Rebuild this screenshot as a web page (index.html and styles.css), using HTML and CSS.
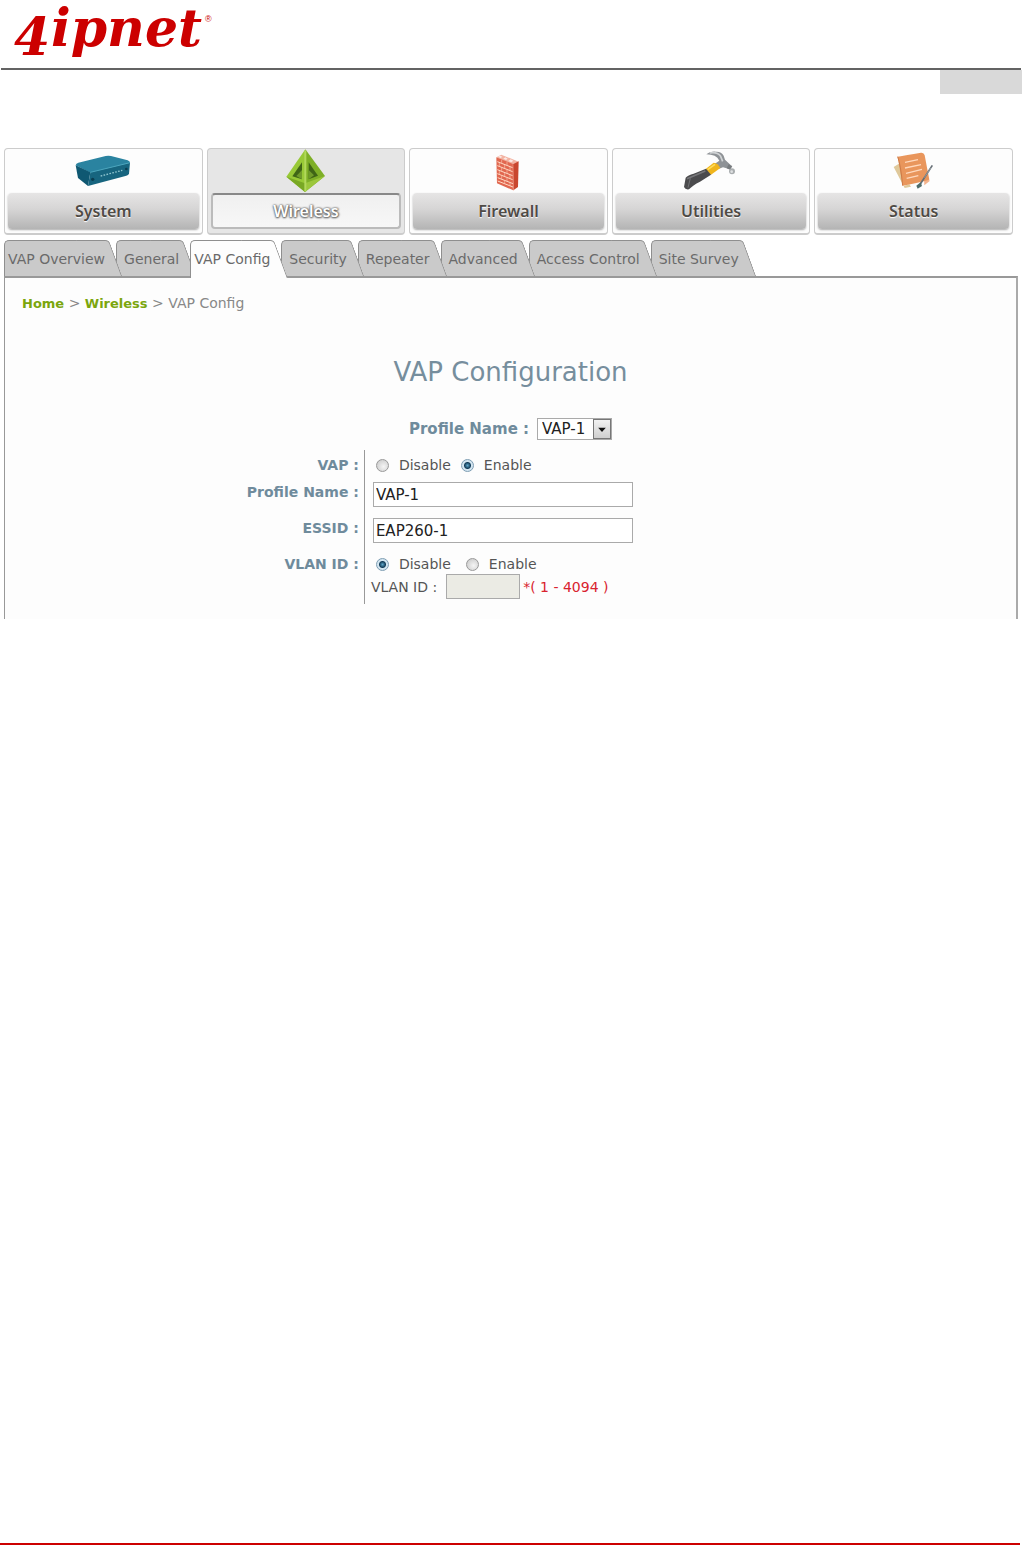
FILE: index.html
```html
<!DOCTYPE html>
<html lang="en">
<head>
  <meta charset="UTF-8" />
  <meta name="viewport" content="width=device-width, initial-scale=1.0"/>
  <title>VAP Configuration</title>
  <link rel="stylesheet" href="styles.css">
</head>
<body>
  <header class="page-header">
    <svg class="logo" viewBox="0 0 212 68" role="img" aria-label="4ipnet">
      <text class="logo-text" x="13" y="55">4</text>
      <text class="logo-text" x="50" y="46">ipnet</text>
      <text class="logo-mark" x="204" y="22">®</text>
    </svg>
  </header>
  <div class="page-marker"></div>

  <main>
    <nav class="main-nav">
      <a class="nav-card" href="#system">
        <svg class="nav-icon" viewBox="220 27 180 132">
          <path d="M228 76 Q229 70 236 68 L318 48 Q326 46 334 48 L384 61 Q392 64 391 70 L272 98 Z" fill="#2a83a0"/>
          <path d="M228 76 L272 97 L265 138 L235 114 Z" fill="#0f5872"/>
          <path d="M272 97 L391 68 L388 101 Q386 105 380 107 L265 138 Z" fill="#17657f"/>
          <path d="M272 97 L391 68" stroke="#4ba5bd" stroke-width="3"/>
          <path d="M303 108 L368 91" stroke="#8fc5cf" stroke-width="4" stroke-dasharray="5 4"/>
          <circle cx="279" cy="118" r="5" fill="#0a3d50"/>
          <circle cx="380" cy="87" r="4" fill="#0a3d50"/>
        </svg>
        <span class="nav-label">System</span>
      </a>
      <a class="nav-card active" href="#wireless">
        <svg class="nav-icon" viewBox="229 27 180 132">
          <path d="M317 28 L260 110 L316 156 Z" fill="#98c937"/>
          <path d="M317 28 L376 108 L316 156 Z" fill="#7eaf27"/>
          <path d="M260 110 L316 130 L316 156 Z" fill="#79a824"/>
          <path d="M316 130 L376 108 L316 156 Z" fill="#9cc73c"/>
          <path d="M307 67 L307 118 L278 109 Z" fill="#3f6516"/>
          <path d="M307 90 L307 118 L290 108 Z" fill="#6f9a2a"/>
          <path d="M327 67 L327 118 L355 107 Z" fill="#3f6516"/>
          <path d="M327 90 L327 118 L343 106 Z" fill="#6f9a2a"/>
          <path d="M317 32 L317 154" stroke="#b2d85c" stroke-width="6"/>
        </svg>
        <span class="nav-label">Wireless</span>
      </a>
      <a class="nav-card" href="#firewall">
        <svg class="nav-icon" viewBox="220 27 180 132">
          <path d="M275 52 L290 44 L342 65 L325 75 Z" fill="#f3b3a2"/>
          <path d="M275 52 L325 72 L326 151 L277 130 Z" fill="#e1674f"/>
          <path d="M325 73 L342 64 L340 141 L326 151 Z" fill="#c9472f"/>
          <path d="M278 65 L324 83 M278 77 L324 95 M278 89 L324 107 M278 101 L324 119 M279 113 L325 131 M279 123 L325 141" stroke="#ffd9c4" stroke-width="3"/>
          <path d="M291 60 V70 M307 66 V76 M284 69 V80 M300 75 V86 M316 81 V92 M291 83 V94 M307 89 V101 M284 93 V104 M300 99 V110 M316 105 V116 M291 107 V118 M307 113 V124 M300 122 V132 M316 128 V138" stroke="#f9c3ad" stroke-width="2"/>
          <path d="M325 73 L326 151" stroke="#f0947e" stroke-width="2"/>
          <path d="M280 50 L286 47 L293 50 L288 54 Z M296 56 L302 52 L309 56 L304 60 Z M311 63 L318 58 L326 62 L320 67 Z" fill="#fff" opacity="0.7"/>
        </svg>
        <span class="nav-label">Firewall</span>
      </a>
      <a class="nav-card" href="#utilities">
        <svg class="nav-icon" viewBox="229 27 180 132">
          <path d="M305 43 Q316 33 334 35 Q350 34 357 47 L361 59 L378 75 L371 86 L355 82 L339 88 L325 75 L344 62 Q335 43 305 43 Z" fill="#8e9296"/>
          <path d="M315 39 Q338 35 348 49 L354 64" fill="none" stroke="#d0d3d5" stroke-width="5"/>
          <path d="M369 79 L380 84" stroke="#777b7e" stroke-width="13"/>
          <circle cx="382" cy="94" r="9" fill="#a9adaf"/>
          <circle cx="381" cy="95" r="4" fill="#dfe1e2"/>
          <path d="M303 87 L327 68 Q340 69 347 84 L318 105 Z" fill="#f0b51c"/>
          <path d="M309 89 L331 73" stroke="#ffdc59" stroke-width="5"/>
          <path d="M304 86 L319 104 L286 125 Q264 136 253 148 Q242 150 238 141 L243 113 Q250 105 267 101 Z" fill="#4b4b4d"/>
          <path d="M247 116 Q279 103 302 93" fill="none" stroke="#77777a" stroke-width="5"/>
          <path d="M250 143 L257 115" stroke="#858588" stroke-width="2"/>
        </svg>
        <span class="nav-label">Utilities</span>
      </a>
      <a class="nav-card" href="#status">
        <svg class="nav-icon" viewBox="250 27 180 132">
          <path d="M279 81 L297 70 L309 138 L326 133 L331 140 L312 144 Z" fill="#dfc89a"/>
          <path d="M370 113 L388 122 L371 136 Z" fill="#f3b38c"/>
          <path d="M291 50 Q315 45 361 38 Q370 37 372 46 L386 119 Q355 128 306 137 Z" fill="#e9965c"/>
          <path d="M291 50 Q300 74 306 137" fill="none" stroke="#cc7a47" stroke-width="3"/>
          <path d="M313 67 L352 59 M313 84 L361 74 M316 100 L364 88 M318 115 L353 107" fill="none" stroke="#ffd9bd" stroke-width="4"/>
          <path d="M395 76 L359 132" stroke="#656e75" stroke-width="5"/>
          <path d="M391 83 L371 113" stroke="#a6adb2" stroke-width="2"/>
          <path d="M360 127 L364 138 L351 146 L347 137 Z" fill="#4f6d6b"/>
        </svg>
        <span class="nav-label">Status</span>
      </a>
    </nav>

    <ul class="tabs">
      <li><a href="#vap-overview">VAP Overview</a></li>
      <li><a href="#general">General</a></li>
      <li class="current"><a href="#vap-config">VAP Config</a></li>
      <li><a href="#security">Security</a></li>
      <li><a href="#repeater">Repeater</a></li>
      <li><a href="#advanced">Advanced</a></li>
      <li><a href="#access-control">Access Control</a></li>
      <li><a href="#site-survey">Site Survey</a></li>
    </ul>

    <section class="panel">
      <div class="breadcrumb">
        <a href="#home">Home</a> &gt; <a href="#wireless">Wireless</a> &gt; VAP Config
      </div>

      <h1>VAP Configuration</h1>

      <form>
        <div class="profile-picker">
          <label for="profile-select">Profile Name :</label>
          <div class="select-box">
            <select id="profile-select">
              <option>VAP-1</option>
            </select>
            <svg class="select-arrow" viewBox="0 0 19 21">
              <path d="M5 9 H14 L9.5 14 Z" fill="#111"/>
            </svg>
          </div>
        </div>

        <div class="form-row status-row" role="radiogroup" aria-labelledby="vap-label">
          <span class="form-label" id="vap-label">VAP :</span>
          <div class="field">
            <div class="radios">
              <label><input type="radio" name="vap"> Disable</label>
              <label><input type="radio" name="vap" checked> Enable</label>
            </div>
          </div>
        </div>

        <div class="form-row">
          <label class="form-label" for="profile-name">Profile Name :</label>
          <div class="field">
            <input type="text" class="text-input" id="profile-name" value="VAP-1">
          </div>
        </div>

        <div class="form-row">
          <label class="form-label" for="essid">ESSID :</label>
          <div class="field">
            <input type="text" class="text-input" id="essid" value="EAP260-1">
          </div>
        </div>

        <div class="form-row vlan-row" role="radiogroup" aria-labelledby="vlan-label">
          <span class="form-label" id="vlan-label">VLAN ID :</span>
          <div class="field">
            <div class="radios wide">
              <label><input type="radio" name="vlan" checked> Disable</label>
              <label><input type="radio" name="vlan"> Enable</label>
            </div>
            <div class="vlan-id">
              <label for="vlan-id">VLAN ID :</label>
              <input type="text" class="text-input" id="vlan-id" disabled>
              <span class="hint">*( 1 - 4094 )</span>
            </div>
          </div>
        </div>
      </form>
    </section>
  </main>

  <footer class="page-footer"></footer>
</body>
</html>
```
FILE: styles.css
```css
* {
  box-sizing: border-box;
}

body {
  margin: 0;
  min-height: 100vh;
  display: flex;
  flex-direction: column;
  font-family: Verdana, "DejaVu Sans", sans-serif;
  font-size: 14px;
  color: #555;
  background: #fff;
}

/* header */
.page-header {
  height: 70px;
  border-bottom: 2px solid #636363;
  margin: 0 1px;
}

.logo {
  display: block;
  width: 212px;
  height: 68px;
  overflow: visible;
}

.logo-text {
  font-family: Georgia, "DejaVu Serif", serif;
  font-size: 52px;
  font-weight: bold;
  font-style: italic;
  fill: #cc0000;
}

.logo-mark {
  font-family: "Liberation Sans", sans-serif;
  font-size: 9px;
  fill: #cc0000;
}

.page-marker {
  align-self: flex-end;
  width: 82px;
  height: 24px;
  background: #d9d9d9;
}

main {
  padding: 54px 4px 0;
}

/* main navigation */
.main-nav {
  display: grid;
  grid-template-columns: repeat(5, 1fr);
  gap: 4px;
  margin-right: 5px;
}

.nav-card {
  display: flex;
  flex-direction: column;
  align-items: center;
  height: 87px;
  padding: 0 3px;
  border: 1px solid #ccc;
  border-bottom: 2px solid #ccc;
  border-radius: 4px;
  background: #fdfdfd;
  text-decoration: none;
}

.nav-icon {
  width: 60px;
  height: 44px;
}

.nav-label {
  align-self: stretch;
  height: 36px;
  line-height: 36px;
  border-radius: 4px;
  background: linear-gradient(#e6e5e5, #d6d5d5 45%, #b4b4b4);
  box-shadow: 0 1px 2px #aaa;
  color: #4f4b46;
  font-family: "Noto Sans", sans-serif;
  font-size: 16px;
  font-weight: 600;
  text-align: center;
  text-shadow: 0 1px 1px #fff;
}

.nav-card.active {
  background: #e6e6e6;
}

.nav-card.active .nav-label {
  border: 2px solid #bbb;
  border-top-color: #888;
  line-height: 32px;
  background: linear-gradient(#f0f0f0, #f7f7f7);
  box-shadow: none;
  color: #fff;
  text-shadow: 0 0 2px #555, 0 1px 2px #666, 1px 0 2px #777;
}

/* tabs */
.tabs {
  display: flex;
  list-style: none;
  margin: 5px 0 0;
  padding: 0;
}

.tabs li {
  position: relative;
  z-index: 1;
  height: 36px;
  margin-right: 7px;
  padding: 0 4px 0 8px;
  line-height: 38px;
}

/* each tab lies over the one on its right */
.tabs li:nth-child(1) { z-index: 8; padding-left: 4px; }
.tabs li:nth-child(2) { z-index: 7; }
.tabs li:nth-child(3) { z-index: 9; padding-left: 4px; }
.tabs li:nth-child(4) { z-index: 6; }
.tabs li:nth-child(5) { z-index: 5; }
.tabs li:nth-child(6) { z-index: 4; }
.tabs li:nth-child(7) { z-index: 3; }
.tabs li:nth-child(8) { z-index: 2; }

.tabs li::before,
.tabs li::after {
  content: "";
  position: absolute;
  top: 0;
  bottom: 0;
  z-index: -1;
  border-top: 1px solid #8f8f8f;
  background: #cacaca;
}

.tabs li::before {
  left: 0;
  right: 14px;
  border-left: 1px solid #8f8f8f;
  border-radius: 5px 0 0 0;
}

.tabs li::after {
  right: 0;
  width: 32px;
  border-right: 1px solid #8f8f8f;
  border-radius: 0 4px 0 0;
  transform: skewX(20deg);
  transform-origin: top right;
}

.tabs .current::before,
.tabs .current::after {
  background: #fdfdfd;
  bottom: -2px;
}

.tabs a {
  color: #6a6a6a;
  text-decoration: none;
  white-space: nowrap;
}

/* content panel */
.panel {
  min-height: 343px;
  border: 1px solid #999;
  border-top: 2px solid #999;
  border-right: 2px solid #aaa;
  border-bottom: 0;
  background: #fdfdfd;
}

.breadcrumb {
  padding: 15px 17px 0;
  line-height: 20px;
  color: #888;
}

.breadcrumb a {
  color: #7ba60d;
  font-size: 13px;
  font-weight: bold;
  text-decoration: none;
}

h1 {
  margin: 40px 0 0;
  line-height: 36px;
  color: #768e9d;
  font-size: 26px;
  font-weight: normal;
  text-align: center;
}

.profile-picker {
  display: flex;
  align-items: center;
  justify-content: center;
  gap: 8px;
  height: 22px;
  margin: 28px 0 10px;
  color: #6f8b9c;
  font-size: 15px;
  font-weight: bold;
}

.select-box {
  position: relative;
}

select {
  display: block;
  appearance: none;
  width: 75px;
  height: 22px;
  padding: 0 20px 0 4px;
  border: 1px solid #aaa;
  border-radius: 0;
  background: #fff;
  color: #222;
  font-family: inherit;
  font-size: 15px;
}

.select-arrow {
  position: absolute;
  top: 1px;
  right: 1px;
  width: 18px;
  height: 20px;
  border: 1px solid #777;
  background: linear-gradient(#f2f2f2, #cfcfcf);
  pointer-events: none;
}

/* form rows */
.form-row {
  display: grid;
  grid-template-columns: 35.5% 1fr;
  min-height: 36px;
}

.form-label {
  padding-right: 5px;
  line-height: 21px;
  color: #6f8b9c;
  font-weight: bold;
  text-align: right;
}

.field {
  padding-left: 8px;
  border-left: 1px solid #999;
}

.status-row {
  min-height: 32px;
}

.status-row .form-label,
.status-row .radios {
  line-height: 30px;
}

.radios {
  display: flex;
  gap: 10px;
  padding-left: 3px;
  line-height: 20px;
}

.radios.wide {
  gap: 15px;
}

.radios label {
  display: flex;
  align-items: center;
  gap: 10px;
}

input[type="radio"] {
  appearance: none;
  width: 13px;
  height: 13px;
  margin: 0;
  border: 1px solid #999;
  border-radius: 50%;
  background: radial-gradient(circle at 60% 60%, #f5f5f5, #c4c4c4);
}

input[type="radio"]:checked {
  border-color: #7d9db3;
  background: radial-gradient(circle, #5ea6c9 0, #123c58 3px, #d3e5f0 4px);
}

.text-input {
  display: block;
  width: 260px;
  height: 25px;
  padding: 0 2px;
  border: 1px solid #aaa;
  background: #fff;
  color: #222;
  font-family: inherit;
  font-size: 15px;
}

.vlan-row {
  min-height: 50px;
}

.vlan-id {
  display: flex;
  align-items: center;
  gap: 3px;
  margin-left: -2px;
}

.vlan-id label {
  margin-right: 6px;
}

.vlan-id .text-input {
  width: 74px;
  background: #ebebe4;
}

.hint {
  color: #d9232e;
}

.page-footer {
  margin: auto 2px 0 0;
  border-bottom: 2px solid #cc0000;
}
```
